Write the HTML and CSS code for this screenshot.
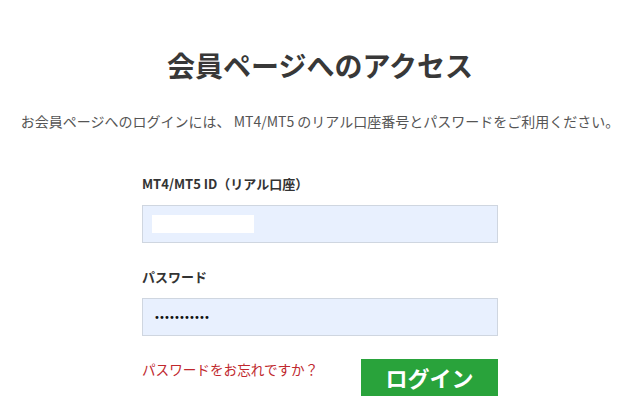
FILE: index.html
```html
<!DOCTYPE html>
<html lang="ja">
<head>
<meta charset="utf-8">
<link rel="stylesheet" href="styles.css">
</head>
<body>
<main class="page">
  <h1 class="title">会員ページへのアクセス</h1>
  <p class="lead">お会員ページへのログインには、 MT4/MT5 のリアル口座番号とパスワードをご利用ください。</p>
  <form class="form">
    <label class="label">MT4/MT5 ID（リアル口座）</label>
    <div class="field"><span class="mask"></span></div>
    <label class="label label-pw">パスワード</label>
    <div class="field"><span class="dots">•••••••••••</span></div>
    <div class="actions">
      <a class="forgot">パスワードをお忘れですか？</a>
      <button type="button" class="btn">ログイン</button>
    </div>
  </form>
</main>
</body>
</html>
```
FILE: styles.css
```css
html, body {
  margin: 0;
  padding: 0;
  background: #ffffff;
}
.page {
  width: 640px;
  height: 420px;
  font-family: "Noto Sans CJK JP", "Noto Sans", sans-serif;
  color: #333;
  display: flex;
  flex-direction: column;
  align-items: center;
}
.title {
  margin: 46px 0 0;
  font-size: 28px;
  line-height: 38px;
  font-weight: 700;
  color: #383838;
  letter-spacing: 0;
}
.lead {
  margin: 27px 0 0;
  font-size: 14px;
  line-height: 20px;
  color: #555;
  white-space: nowrap;
}
.form {
  width: 356px;
  margin-top: 43px;
  display: flex;
  flex-direction: column;
}
.label {
  font-size: 13px;
  font-weight: 700;
  line-height: 20px;
  color: #333;
}
.label-pw {
  margin-top: 24px;
}
.field {
  margin-top: 11px;
  height: 36px;
  border: 1px solid #cfd6e0;
  background: #e8f0fe;
  display: flex;
  align-items: center;
  padding-left: 9px;
}
.mask {
  width: 102px;
  height: 18px;
  background: #fff;
}
.dots {
  font-family: "DejaVu Sans", sans-serif;
  font-size: 10px;
  color: #111;
  letter-spacing: -0.9px;
  padding-left: 2px;
}
.actions {
  margin-top: 23px;
  display: flex;
  justify-content: space-between;
  align-items: center;
}
.forgot {
  font-size: 13.6px;
  color: #c0282d;
  margin-top: -18px;
}
.btn {
  width: 137px;
  height: 37px;
  border: 0;
  background: #29a33b;
  color: #fff;
  font-family: "Noto Sans CJK JP", sans-serif;
  font-size: 22px;
  font-weight: 700;
  padding: 0;
  line-height: 37px;
}
```
